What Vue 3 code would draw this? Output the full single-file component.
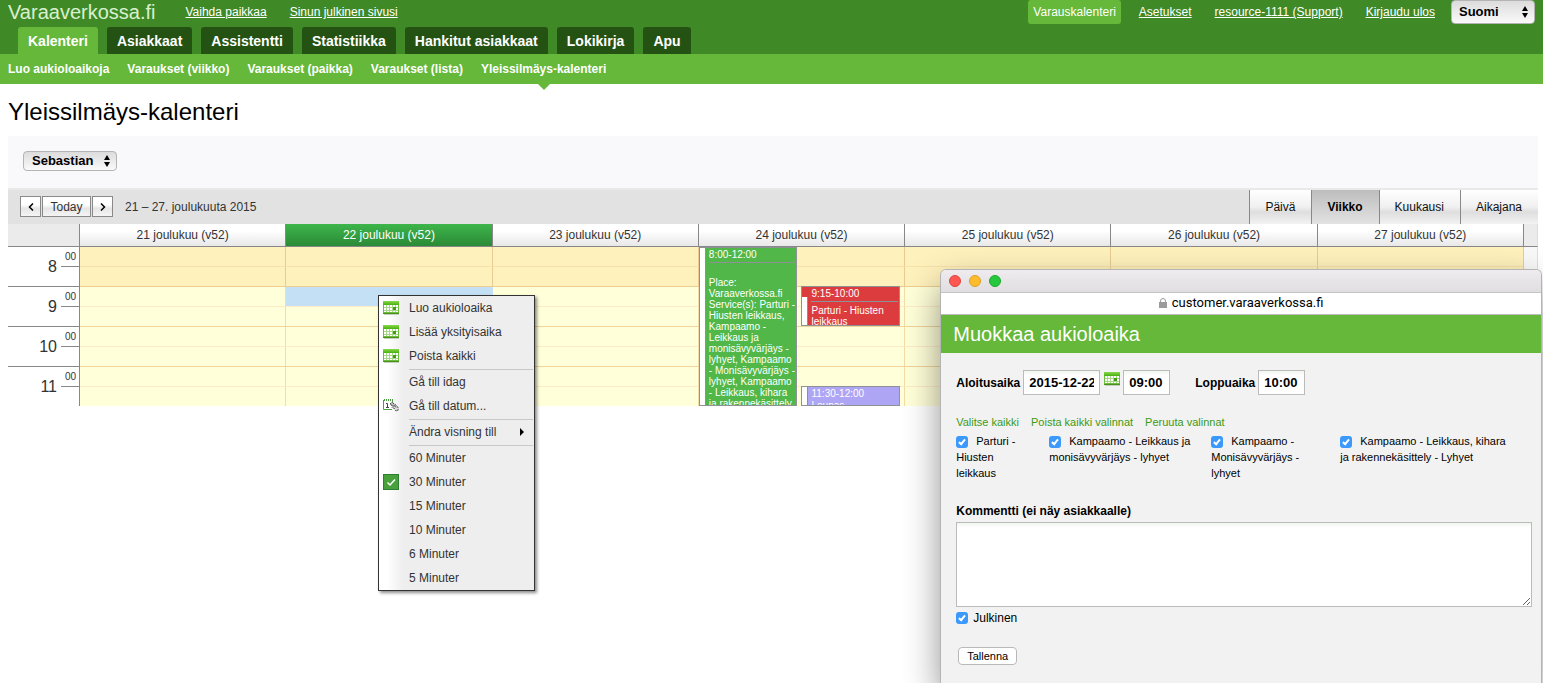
<script setup>
import { ref } from 'vue'

const topLinks = ['Vaihda paikkaa', 'Sinun julkinen sivusi']
const accountLinks = ['Asetukset', 'resource-1111 (Support)', 'Kirjaudu ulos']
const tabs = ['Kalenteri', 'Asiakkaat', 'Assistentti', 'Statistiikka', 'Hankitut asiakkaat', 'Lokikirja', 'Apu']
const subTabs = ['Luo aukioloaikoja', 'Varaukset (viikko)', 'Varaukset (paikka)', 'Varaukset (lista)', 'Yleissilmäys-kalenteri']
const views = ['Päivä', 'Viikko', 'Kuukausi', 'Aikajana']
const days = [21, 22, 23, 24, 25, 26, 27]
const hours = [8, 9, 10, 11]

const events = [
  {
    kind: 'green',
    time: '8:00-12:00',
    text: 'Place: Varaaverkossa.fi Service(s): Parturi - Hiusten leikkaus, Kampaamo - Leikkaus ja monisävyvärjäys - lyhyet, Kampaamo - Monisävyvärjäys - lyhyet, Kampaamo - Leikkaus, kihara ja rakennekäsittely',
  },
  { kind: 'red', time: '9:15-10:00', text: 'Parturi - Hiusten leikkaus' },
  { kind: 'violet', time: '11:30-12:00', text: 'Lounas' },
]

const menu = [
  { label: 'Luo aukioloaika', icon: 'calendar' },
  { label: 'Lisää yksityisaika', icon: 'calendar' },
  { label: 'Poista kaikki', icon: 'calendar' },
  { separator: true },
  { label: 'Gå till idag' },
  { label: 'Gå till datum...', icon: 'pick' },
  { separator: true },
  { label: 'Ändra visning till', submenu: true },
  { separator: true },
  { label: '60 Minuter' },
  { label: '30 Minuter', icon: 'checked' },
  { label: '15 Minuter' },
  { label: '10 Minuter' },
  { label: '6 Minuter' },
  { label: '5 Minuter' },
]

const services = ref([
  { label: 'Parturi - Hiusten leikkaus', on: true },
  { label: 'Kampaamo - Leikkaus ja monisävyvärjäys - lyhyet', on: true },
  { label: 'Kampaamo - Monisävyvärjäys - lyhyet', on: true },
  { label: 'Kampaamo - Leikkaus, kihara ja rakennekäsittely - Lyhyet', on: true },
])
const language = ref('Suomi')
const resource = ref('Sebastian')
const startDate = ref('2015-12-22')
const startTime = ref('09:00')
const endTime = ref('10:00')
const comment = ref('')
const isPublic = ref(true)
</script>

<template>
  <div class="page">
    <svg class="defs" aria-hidden="true">
      <defs>
        <linearGradient id="calTop" x1="0" y1="0" x2="0" y2="1">
          <stop offset="0" stop-color="#8ad94c" />
          <stop offset="1" stop-color="#46b00c" />
        </linearGradient>
        <symbol id="cal" viewBox="0 0 16 14">
          <rect x="1" y="13" width="15" height="1" fill="#c3d0ba" />
          <rect x="0" y="0" width="16" height="13" fill="#6cbd3c" />
          <rect x="0" y="12" width="16" height="1" fill="#4a9122" />
          <rect x="0" y="0" width="16" height="4" fill="url(#calTop)" />
          <rect x="1" y="4" width="14" height="7" fill="#fff" />
          <path d="M3.500 4v7M6.500 4v7M9.500 4v7M12.500 4v7M1 6.500h14M1 9.500h14" stroke="#a9d78a" stroke-width="1" />
          <rect x="10" y="6" width="3" height="3" fill="#3f9f10" />
        </symbol>
      </defs>
    </svg>

    <header>
      <div class="topbar">
        <span class="logo">Varaaverkossa.fi</span>
        <nav class="links" aria-label="Paikka">
          <a v-for="l in topLinks" :key="l" href="#">{{ l }}</a>
        </nav>
        <nav class="links account" aria-label="Tili">
          <a class="current" href="#">Varauskalenteri</a>
          <a v-for="l in accountLinks" :key="l" href="#">{{ l }}</a>
        </nav>
        <span class="select language">
          <select v-model="language" aria-label="Kieli"><option>Suomi</option></select>
          <svg width="6" height="12" viewBox="0 0 6 12"><path d="M3 0L6 5H0zM3 12L0 7H6z" /></svg>
        </span>
      </div>
      <nav class="tabs" aria-label="Päävalikko">
        <a v-for="(t, i) in tabs" :key="t" href="#" :class="{ active: i === 0 }">{{ t }}</a>
      </nav>
      <nav class="subtabs" aria-label="Alavalikko">
        <a v-for="(t, i) in subTabs" :key="t" href="#" :class="{ active: i === 4 }">{{ t }}</a>
      </nav>
    </header>

    <main>
      <h1>Yleissilmäys-kalenteri</h1>
      <div class="filter">
        <span class="select">
          <select v-model="resource" aria-label="Resurssi"><option>Sebastian</option></select>
          <svg width="6" height="12" viewBox="0 0 6 12"><path d="M3 0L6 5H0zM3 12L0 7H6z" /></svg>
        </span>
      </div>

      <div class="toolbar">
        <div class="pager">
          <button type="button" aria-label="Edellinen">
            <svg width="6" height="8" viewBox="0 0 6 8"><path d="M5 .5L1.500 4L5 7.500" /></svg>
          </button>
          <button type="button">Today</button>
          <button type="button" aria-label="Seuraava">
            <svg width="6" height="8" viewBox="0 0 6 8"><path d="M1 .5L4.500 4L1 7.500" /></svg>
          </button>
        </div>
        <span class="range">21 – 27. joulukuuta 2015</span>
        <div class="views">
          <button v-for="v in views" :key="v" type="button" :class="{ active: v === 'Viikko' }">{{ v }}</button>
        </div>
      </div>

      <table class="week">
        <colgroup>
          <col class="c-time" />
          <col v-for="d in days" :key="d" />
          <col class="c-end" />
        </colgroup>
        <thead>
          <tr>
            <td></td>
            <th v-for="d in days" :key="d" scope="col" :class="{ today: d === 22 }">{{ d }} joulukuu (v52)</th>
            <td class="end"></td>
          </tr>
        </thead>
        <tbody v-for="h in hours" :key="h" :class="{ closed: h === 8 }">
          <tr class="first">
            <th rowspan="2" scope="row">
              <div class="hour"><span>{{ h }}</span><span class="min">00</span></div>
            </th>
            <td v-for="d in days" :key="d" :class="{ picked: h === 9 && d === 22 }">
              <template v-if="h === 8 && d === 24">
                <article v-for="e in events" :key="e.time" class="event" :class="e.kind">
                  <div class="event-time">{{ e.time }}</div>
                  <div class="event-text">{{ e.text }}</div>
                </article>
              </template>
            </td>
            <td rowspan="2" class="end"></td>
          </tr>
          <tr class="second">
            <td v-for="d in days" :key="d"></td>
          </tr>
        </tbody>
      </table>
    </main>

    <ul class="menu" role="menu">
      <li v-for="(m, i) in menu" :key="i" :role="m.separator ? 'separator' : 'none'" :class="{ sep: m.separator }">
        <button v-if="!m.separator" type="button" role="menuitem">
          <span class="slot">
            <svg v-if="m.icon === 'calendar'" width="16" height="14"><use href="#cal" /></svg>
            <svg v-else-if="m.icon === 'pick'" width="16" height="14" viewBox="0 0 16 14">
              <rect x=".5" y="1.500" width="9" height="9" fill="#fff" />
              <path d="M.5 1v9.500h8.500M9.500 2v2" fill="none" stroke="#4f9e45" />
              <path d="M1.500 0v2M3.500 0v2M5.500 0v2M7.500 0v2M9.500 0v2" stroke="#4f9e45" />
              <path d="M3 4.500h1.500v4M3 8.500h3" fill="none" stroke="#444" />
              <path d="M7 5l2-1.500 2.500 1.500 2.500 2 1.500 2.500-1 2.500-2-.5-1-2-2.500-1 1-1z" fill="#ddd" stroke="#444" stroke-dasharray="2 1" />
              <path d="M8.500 5.500l3 2M11 5.500l2 3" stroke="#666" />
            </svg>
            <svg v-else-if="m.icon === 'checked'" width="16" height="16" viewBox="0 0 16 16">
              <rect x=".5" y=".5" width="15" height="15" fill="#48a23c" stroke="#2f7d32" />
              <path d="M4.500 8.500L7 11L12 5.500" fill="none" stroke="#fff" stroke-width="1.500" />
            </svg>
          </span>
          <span>{{ m.label }}</span>
          <svg v-if="m.submenu" class="sub" width="4" height="8" viewBox="0 0 4 8"><path d="M0 0L4 4L0 8z" /></svg>
        </button>
      </li>
    </ul>

    <section class="window" aria-label="Muokkaa aukioloaika">
      <div class="titlebar"><i class="close"></i><i class="minimise"></i><i class="zoom"></i></div>
      <div class="address">
        <svg width="8" height="10" viewBox="0 0 8 10">
          <rect y="4" width="8" height="6" fill="#9b9b9b" />
          <path d="M1.500 5V3a2.500 2.500 0 0 1 5 0v2" fill="none" stroke="#9b9b9b" />
        </svg>
        <span>customer.varaaverkossa.fi</span>
      </div>
      <h2>Muokkaa aukioloaika</h2>
      <form @submit.prevent>
        <div class="times">
          <label for="start-date">Aloitusaika</label>
          <input id="start-date" v-model="startDate" class="date" type="text" />
          <button class="picker" type="button" aria-label="Valitse päivä">
            <svg width="16" height="14"><use href="#cal" /></svg>
          </button>
          <input v-model="startTime" class="time" type="text" aria-label="Aloitusaika, kello" />
          <label class="later" for="end-time">Loppuaika</label>
          <input id="end-time" v-model="endTime" class="time" type="text" />
        </div>
        <div class="actions">
          <a href="#">Valitse kaikki</a>
          <a href="#">Poista kaikki valinnat</a>
          <a href="#">Peruuta valinnat</a>
        </div>
        <div class="services">
          <label v-for="s in services" :key="s.label"><input v-model="s.on" type="checkbox" />{{ s.label }}</label>
        </div>
        <label class="heading" for="comment">Kommentti (ei näy asiakkaalle)</label>
        <textarea id="comment" v-model="comment"></textarea>
        <label class="public"><input v-model="isPublic" type="checkbox" />Julkinen</label>
        <button class="save" type="submit">Tallenna</button>
      </form>
    </section>
  </div>
</template>

<style>
body {
  margin: 0;
  background: #fff;
}
</style>

<style scoped>
.page {
  position: relative;
  min-height: 100vh;
  overflow: hidden;
  font: 12px/16px "Liberation Sans", Arial, sans-serif;
  color: #333;
}
.page *,
.page *::after {
  box-sizing: border-box;
}
button,
input,
select,
textarea {
  margin: 0;
  font: inherit;
  color: inherit;
}
.defs {
  position: absolute;
  width: 0;
  height: 0;
}

/* header */
header {
  background: #3f8a26;
}
.topbar {
  display: flex;
  align-items: center;
  height: 24px;
  padding: 0 8px;
}
.logo {
  margin-right: 25px;
  font-size: 20px;
  line-height: 24px;
  color: #d9f0cf;
}
.links {
  display: flex;
  gap: 13px;
}
.links a {
  padding: 0 5px;
  line-height: 24px;
  color: #fff;
}
.links a.current {
  border-radius: 3px;
  background: #65b839;
  text-decoration: none;
}
.account {
  margin-left: auto;
}
.select {
  position: relative;
  display: inline-flex;
}
.select select {
  appearance: none;
  width: 94px;
  height: 20px;
  padding: 0 8px;
  border: 1px solid #b4b4b4;
  border-radius: 4px;
  background: linear-gradient(#dcdcdc, #fafafa);
  font-size: 13px;
  font-weight: bold;
  color: #000;
}
.select svg {
  position: absolute;
  top: calc(50% - 6px);
  right: 7px;
  pointer-events: none;
}
.language {
  margin-left: 11px;
}
.language select {
  width: 84px;
  height: 24px;
  padding: 0 7px;
}
.tabs {
  display: flex;
  gap: 9px;
  padding: 3px 18px 0;
}
.tabs a {
  height: 27px;
  padding: 0 10px;
  border-radius: 3px 3px 0 0;
  background: #245213;
  font-size: 14px;
  font-weight: bold;
  line-height: 29px;
  color: #fff;
  text-decoration: none;
}
.tabs a.active {
  background: #65b839;
}
.subtabs {
  display: flex;
  gap: 18px;
  padding: 0 8px;
  background: #65b839;
}
.subtabs a {
  position: relative;
  font-weight: bold;
  line-height: 30px;
  color: #fff;
  text-decoration: none;
}
.subtabs a.active::after {
  content: "";
  position: absolute;
  top: 100%;
  left: calc(50% - 6px);
  border: 6px solid transparent;
  border-top-color: #65b839;
  border-bottom: 0;
}

/* calendar */
main {
  padding: 0 5px 0 8px;
}
h1 {
  margin: 0;
  padding: 14px 0 10px;
  font-size: 24px;
  font-weight: normal;
  line-height: 28px;
  color: #000;
}
.filter {
  padding: 15px 15px 17px;
  background: #f9f9fb;
}
.filter .select {
  display: flex;
  width: 94px;
}
.toolbar {
  display: flex;
  align-items: flex-start;
  height: 36px;
  padding-left: 12px;
  border-top: 2px solid #e9e9e9;
  background: #e2e2e2;
}
.pager {
  display: flex;
  gap: 1px;
  padding-top: 6px;
}
.pager button {
  display: flex;
  align-items: center;
  justify-content: center;
  min-width: 21px;
  height: 21px;
  padding: 0;
  border: 1px solid #8a8a8a;
  background: linear-gradient(#fff 40%, #e6e6e6 60%, #f4f4f4);
}
.pager button:nth-child(2) {
  min-width: 49px;
}
.pager svg path {
  fill: none;
  stroke: #000;
  stroke-width: 1.5;
}
.range {
  margin-left: 12px;
  line-height: 34px;
}
.views {
  display: flex;
  align-self: stretch;
  margin-left: auto;
}
.views button {
  padding: 0 16px 0 15px;
  border: 0;
  border-left: 1px solid #888;
  background: linear-gradient(#fff, #f0f0f0 50%, #dedede 65%, #f2f2f2);
  color: #111;
}
.views button.active {
  background: linear-gradient(#bdbdbd, #e2e2e2);
  font-weight: bold;
  color: #000;
}
.week {
  width: 100%;
  table-layout: fixed;
  border-collapse: separate;
  border-spacing: 0;
}
.week td,
.week th {
  padding: 0;
  font-weight: normal;
}
.c-time {
  width: 72px;
}
.c-end {
  width: 14px;
}
thead td,
thead th {
  height: 23px;
  border-right: 1px solid #888;
  border-bottom: 1px solid #888;
}
thead td {
  background: #ebebeb;
}
thead th {
  background: linear-gradient(#fff 30%, #e8e8e8);
}
thead th.today {
  background: linear-gradient(#3db54a, #2c8a37);
  color: #fff;
}
thead td.end {
  border-right-color: #ddd;
}
tbody th {
  height: 40px;
  border-right: 1px solid #888;
  border-bottom: 1px solid #888;
  vertical-align: top;
}
.hour {
  display: flex;
  justify-content: flex-end;
  gap: 4px;
  font-size: 16px;
  line-height: 39px;
}
.min {
  width: 18px;
  height: 20px;
  padding-right: 3px;
  border-bottom: 1px solid #888;
  font-size: 10px;
  line-height: 20px;
  text-align: right;
}
tbody td {
  position: relative;
  height: 20px;
  border-right: 1px solid #f3dca6;
  background: #ffffd9;
}
tr.first td {
  border-bottom: 1px solid #fdecc5;
}
tr.second td {
  border-bottom: 1px solid #f2d39a;
}
.closed td {
  border-right-color: #e9cb92;
  background: #fff1bc;
}
.closed tr.first td {
  border-bottom-color: #f7e2a9;
}
.closed tr.second td {
  border-bottom-color: #ecce92;
}
tr.first td.picked {
  border-right-color: #c3e0f4;
  background: #c3e0f4;
}
tbody tr td.end {
  border-right: 1px solid #ddd;
  border-bottom: 0;
  background: #f8f8f8;
}
tbody:last-child th {
  height: 39px;
  border-bottom: 0;
}
tbody:last-child .hour {
  height: 39px;
}
tbody:last-child tr.second td {
  height: 19px;
  border-bottom: 0;
}

.event {
  position: absolute;
  z-index: 1;
  overflow: hidden;
  width: 48%;
  padding: 0 1px 0 9px;
  border: 1px solid #8c9296;
  font-size: 10px;
  line-height: 11px;
  color: #fff;
}
.event::after {
  content: "";
  position: absolute;
  top: 0;
  bottom: 0;
  left: 0;
  width: 6px;
  border-right: 1px solid #8c9296;
  background: #fff;
}
.event-time {
  padding-top: 1px;
  line-height: 12px;
}
.event.green {
  top: 0;
  left: 0;
  height: 159px;
  background: #50b748;
}
.event.green .event-time,
.event.red .event-time {
  height: 15px;
  border-bottom: 1px solid #8c9296;
}
.event.green .event-text {
  padding-top: 14px;
}
.event.red {
  top: 39px;
  left: 50%;
  height: 40px;
  background: #dc3c3e;
}
.event.red::after {
  top: 10px;
}
.event.red .event-text {
  padding-top: 3px;
}
.event.violet {
  top: 139px;
  left: 50%;
  height: 20px;
  background: #aea6f5;
}

/* context menu */
.menu {
  position: absolute;
  z-index: 2;
  top: 295px;
  left: 378px;
  width: 157px;
  margin: 0;
  padding: 0;
  border: 1px solid #333;
  background: linear-gradient(90deg, #fff 8px, #eee 24px);
  box-shadow: 2px 2px 3px rgba(0, 0, 0, 0.45);
  list-style: none;
}
.menu button {
  display: flex;
  align-items: center;
  width: 100%;
  height: 24px;
  padding: 0 10px 0 4px;
  border: 0;
  background: none;
}
.slot {
  display: flex;
  width: 26px;
}
.sub {
  margin-left: auto;
}
.sep {
  height: 2px;
  margin: 0 1px 0 30px;
  border-bottom: 1px solid #c8c8c8;
}

/* popup window */
.window {
  position: absolute;
  z-index: 3;
  top: 270px;
  right: 2px;
  bottom: 0;
  left: 61%;
  border-radius: 5px 5px 0 0;
  background: #f2f2f2;
  box-shadow: 0 0 0 1px #b4b4b4, 0 16px 36px rgba(0, 0, 0, 0.45);
  color: #000;
}
.titlebar {
  display: flex;
  gap: 8px;
  height: 23px;
  padding: 5px 8px;
  border-bottom: 1px solid #c6c4c6;
  border-radius: 5px 5px 0 0;
  background: linear-gradient(#efebef, #e0dee0);
}
.titlebar i {
  width: 12px;
  height: 12px;
  border: 1px solid #e0443e;
  border-radius: 50%;
  background: #fc5753;
}
.titlebar .minimise {
  border-color: #dea123;
  background: #fdbc2e;
}
.titlebar .zoom {
  border-color: #1aab29;
  background: #27c840;
}
.address {
  display: flex;
  align-items: center;
  justify-content: center;
  gap: 5px;
  height: 22px;
  padding-bottom: 2px;
  border-bottom: 1px solid #bdbdbd;
  background: #fff;
  font-family: Roboto, sans-serif;
  font-size: 13px;
}
h2 {
  margin: 0;
  padding: 0 12px;
  background: #65b839;
  font-size: 20px;
  font-weight: normal;
  line-height: 38px;
  color: #fff;
}
form {
  padding: 17px 9px 0 15px;
}
.times {
  display: flex;
  align-items: center;
}
.times label {
  margin-right: 3px;
  font-weight: bold;
}
.times .later {
  margin-left: 25px;
}
.times input {
  height: 25px;
  padding: 0 5px;
  border: 1px solid #bbb;
  border-radius: 0;
  background: linear-gradient(#f1f6f0, #fff 5px);
  font-size: 13px;
  font-weight: bold;
}
.times .date {
  width: 77px;
}
.times .time {
  width: 47px;
}
.picker {
  align-self: flex-start;
  display: flex;
  margin: 2px 3px 0 4px;
  padding: 0;
  border: 0;
  background: none;
}
.actions {
  display: flex;
  gap: 12px;
  margin-top: 19px;
  font-size: 11px;
}
.actions a {
  color: #3c9a14;
  text-decoration: none;
}
.services {
  display: grid;
  grid-template-columns: 93px 162px 129px 1fr;
  margin: 3px 4px 0 0;
  font-size: 11px;
}
.services label {
  padding-right: 16px;
}
input[type="checkbox"] {
  appearance: none;
  position: relative;
  flex: none;
  width: 12px;
  height: 12px;
  border-radius: 3px;
  background: #fff;
  vertical-align: -3px;
}
input[type="checkbox"]:checked {
  background: #3b99fc;
}
input[type="checkbox"]:checked::after {
  content: "";
  position: absolute;
  top: 2px;
  left: 4px;
  width: 4px;
  height: 7px;
  border: solid #fff;
  border-width: 0 2px 2px 0;
  transform: rotate(40deg);
}
.services input {
  margin-right: 8px;
}
.heading {
  display: block;
  margin-top: 22px;
  font-weight: bold;
}
textarea {
  display: block;
  width: 100%;
  height: 85px;
  margin-top: 3px;
  border: 1px solid #bbb;
  background: linear-gradient(#f1f6f0, #fff 5px);
  resize: both;
}
.public {
  display: flex;
  align-items: center;
  gap: 5px;
  margin-top: 3px;
}
.save {
  height: 18px;
  margin: 21px 0 0 2px;
  padding: 0 8px;
  border: 1px solid #b9b9b9;
  border-radius: 4px;
  background: #fff;
  font-size: 11px;
  line-height: 16px;
}
</style>
